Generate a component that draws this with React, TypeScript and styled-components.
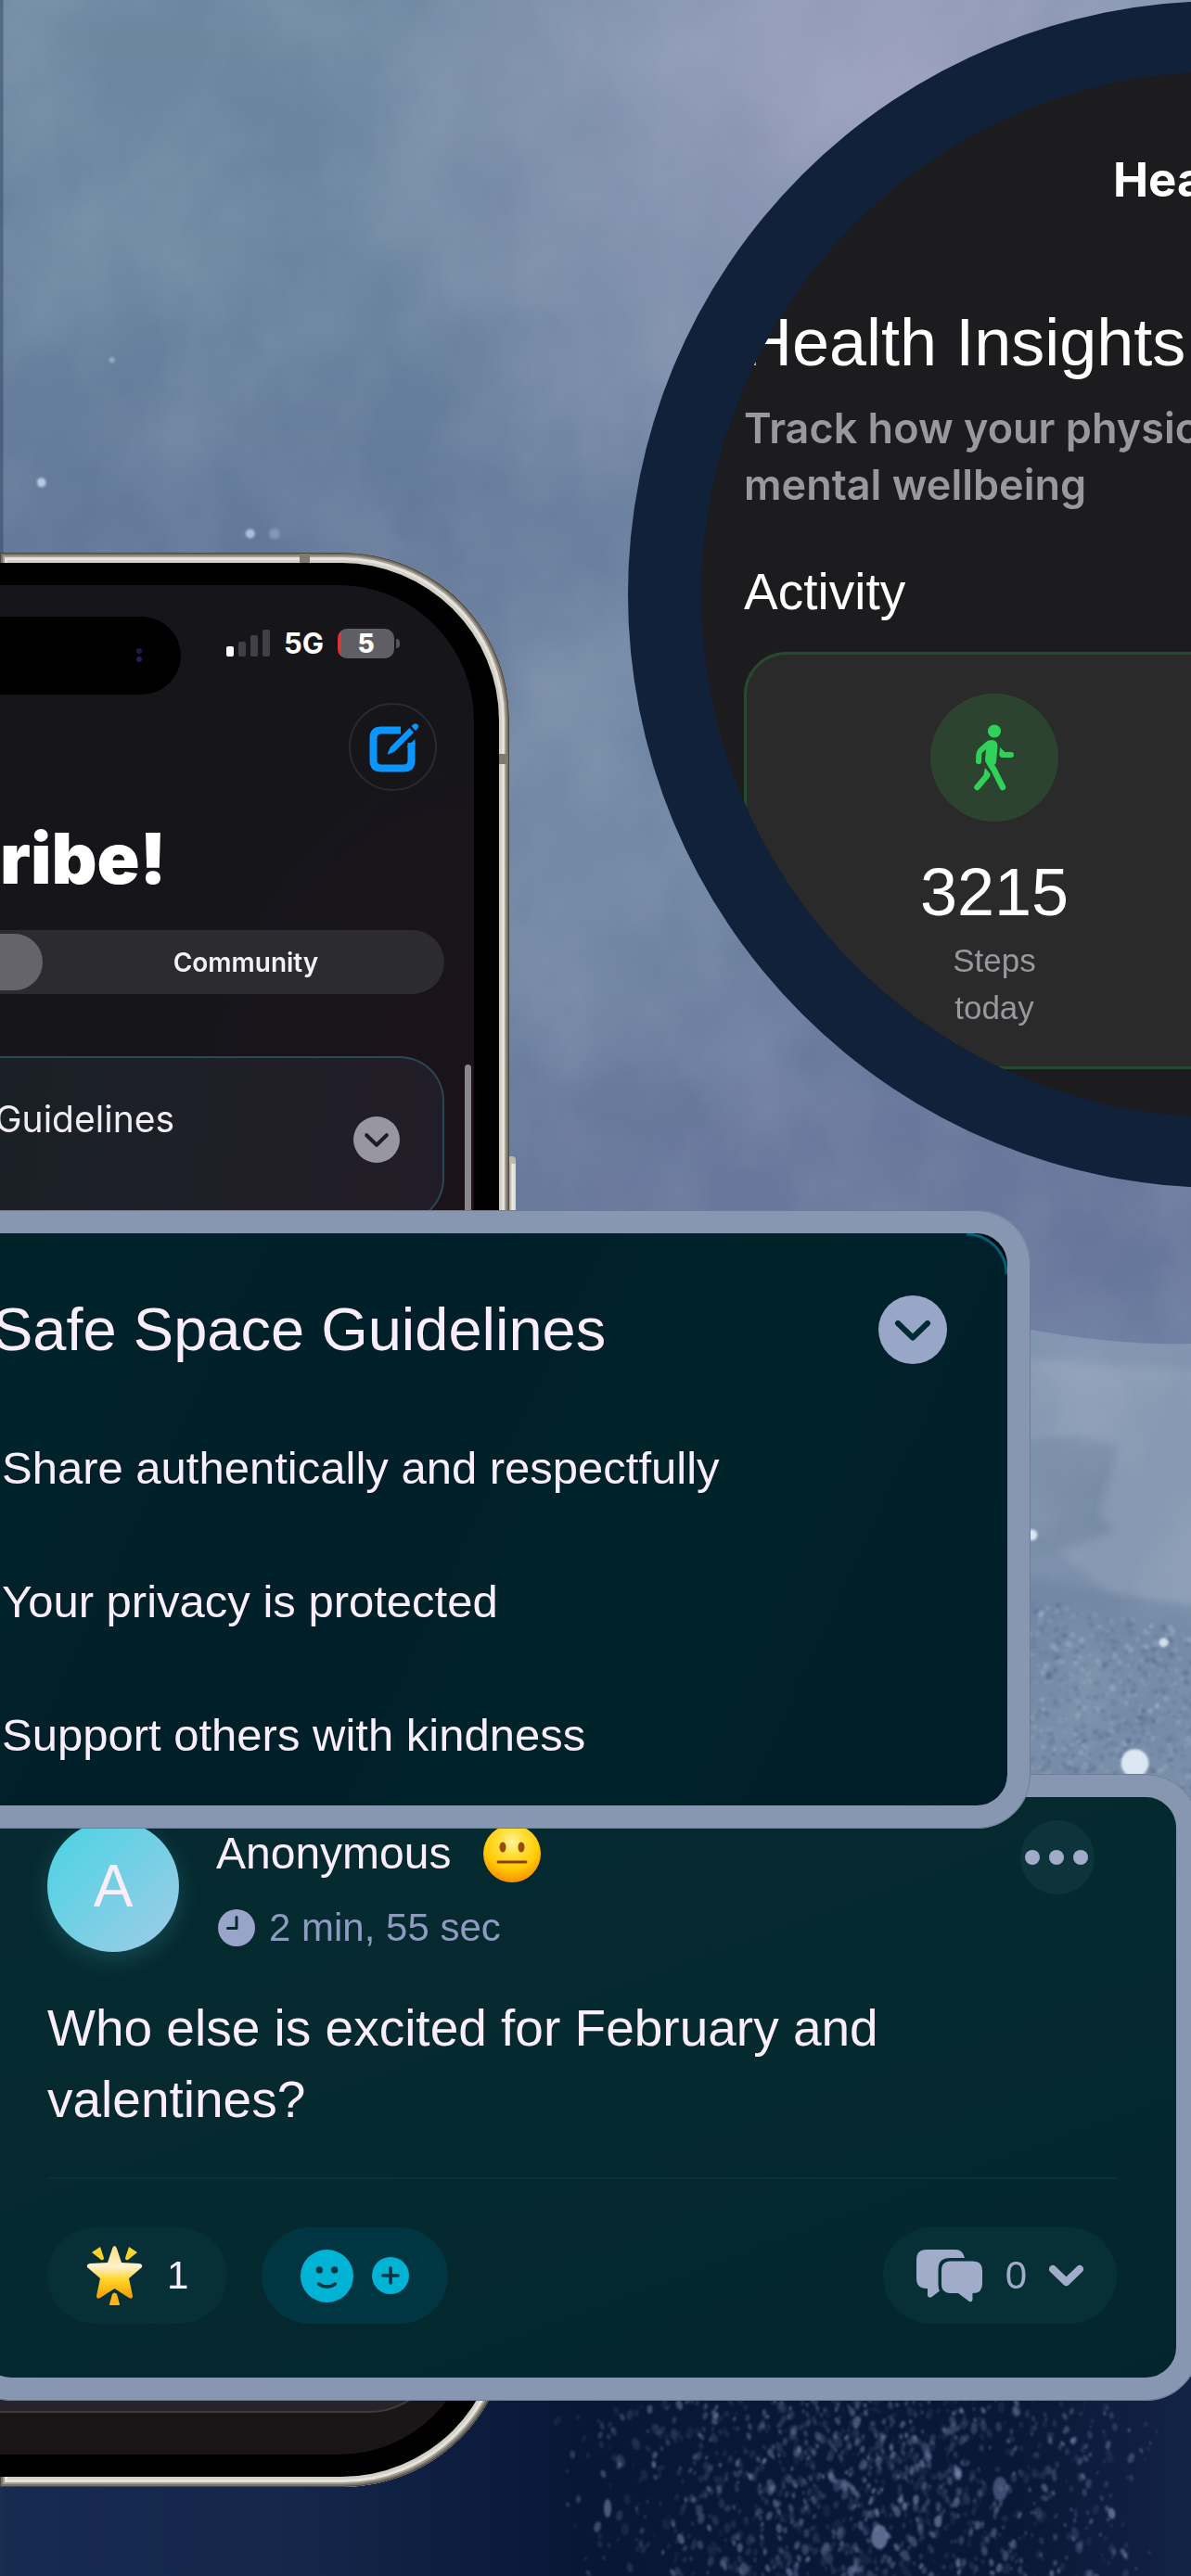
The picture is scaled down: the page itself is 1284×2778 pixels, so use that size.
import React from "react";
import styled, { createGlobalStyle } from "styled-components";

const helvetica = `"Liberation Sans", Arial, sans-serif`;
const system = `Inter, "Liberation Sans", sans-serif`;

const GlobalStyle = createGlobalStyle`
  *, *::before, *::after { box-sizing: border-box; }
  body { margin: 0; background: #64799a; font-family: ${helvetica}; }
  h1, h2, h3, p, ul { margin: 0; padding: 0; font-weight: 400; }
  ul { list-style: none; }
  button { border: 0; padding: 0; font: inherit; color: inherit; cursor: pointer; }
  svg { display: block; flex: none; }
`;

/* ---------- stage ---------- */

const Stage = styled.main`
  position: relative;
  isolation: isolate;
  display: flex;
  flex-direction: column;
  min-height: 100vh;
  padding: 1305px 0 191px;
  overflow: hidden;
`;

const BackdropArt = styled.svg`
  position: absolute;
  inset: 0;
  z-index: -2;
  width: 100%;
  height: 100%;
`;

/* ---------- phone ---------- */

const PhoneFrame = styled.section`
  position: absolute;
  z-index: -1;
  top: 596px;
  bottom: 98px;
  left: 0;
  width: 549px;
  padding: 11px 11px 11px 0;
  border-radius: 0 180px 180px 0;
  background: #d3d0c7;
  box-shadow: inset 0 0 0 1px #4a463c, inset 0 0 0 3px #77736a, inset 0 0 0 5px #a29e94, inset 0 0 0 8px #e6e3dc;
`;

const AntennaBand = styled.span<{ $side: "top" | "right" }>`
  position: absolute;
  background: #7d7a6f;
  ${({ $side }) =>
    $side === "top"
      ? "top: 1px; right: 215px; width: 11px; height: 10px;"
      : "top: 217px; right: 1px; width: 10px; height: 11px;"}
`;

const SideButton = styled.span`
  position: absolute;
  top: 651px;
  right: -7px;
  width: 7px;
  height: 250px;
  border-radius: 0 4px 4px 0;
  border-top: 8px solid #bdb9ad;
  background: linear-gradient(90deg, #a5a196, #efece6 50%, #d8d5cb);
`;

const Bezel = styled.div`
  height: 100%;
  padding: 24px 27px 24px 0;
  border-radius: 0 170px 170px 0;
  background: #000;
`;

const Screen = styled.div`
  position: relative;
  display: flex;
  flex-direction: column;
  height: 100%;
  padding: 34px 0 45px;
  border-radius: 0 146px 146px 0;
  overflow: hidden;
  background:
    radial-gradient(ellipse 300px 420px at 100% 30%, #1d131a, transparent),
    linear-gradient(#16151a, #17151b 40%, #1a1617);
  color: #fff;
  font-family: ${system};
`;

const StatusRow = styled.div`
  display: flex;
  align-items: flex-start;
  gap: 49px;
`;

const Island = styled.div`
  display: flex;
  justify-content: flex-end;
  align-items: center;
  width: 195px;
  height: 84px;
  padding-right: 40px;
  border-radius: 0 42px 42px 0;
  background: #000;
`;

const StatusIcons = styled.div`
  display: flex;
  align-items: center;
  padding-top: 13px;
`;

const Network = styled.span`
  margin-left: 15px;
  font-size: 31px;
  line-height: 32px;
  font-weight: 700;
`;

const Battery = styled.span`
  position: relative;
  display: grid;
  place-items: center;
  width: 61px;
  height: 32px;
  margin-left: 15px;
  border-radius: 10px;
  background: linear-gradient(90deg, #d8363c 4px, #605e65 4px);
  font-size: 28px;
  line-height: 32px;
  font-weight: 800;
  &::after {
    content: "";
    position: absolute;
    right: -6px;
    top: 11px;
    width: 4px;
    height: 10px;
    border-radius: 0 4px 4px 0;
    background: #55535a;
  }
`;

const ComposeButton = styled.button`
  display: grid;
  place-items: center;
  align-self: flex-end;
  width: 95px;
  height: 95px;
  padding-left: 4px;
  margin: 9px 40px 0 0;
  border: 2px solid #2b2a2f;
  border-radius: 50%;
  background: #161519;
`;

const AppTitle = styled.h1`
  margin-top: 32px;
  font-size: 76px;
  line-height: 80px;
  font-weight: 900;
`;

const Segments = styled.div`
  display: flex;
  width: 479px;
  height: 69px;
  margin-top: 38px;
  padding: 4px 0;
  border-radius: 0 35px 35px 0;
  background: #2c2b30;
`;

const Segment = styled.button<{ $selected?: boolean }>`
  flex: ${({ $selected }) => ($selected ? "0 0 46px" : "1")};
  padding-left: ${({ $selected }) => ($selected ? "0" : "5px")};
  border-radius: 0 31px 31px 0;
  background: ${({ $selected }) => ($selected ? "#65636c" : "transparent")};
  color: #f2f2f4;
  font-size: 28px;
  font-weight: 600;
`;

const PhoneCard = styled.div`
  display: flex;
  justify-content: space-between;
  align-items: center;
  width: 479px;
  height: 180px;
  margin-top: 67px;
  padding: 0 46px 0 0;
  border: 2px solid #2d4653;
  border-left: 0;
  border-radius: 0 48px 48px 0;
  background: linear-gradient(100deg, #1a2027, #201f28 60%, #211d28);
`;

const PhoneCardTitle = styled.h2`
  display: flex;
  justify-content: flex-end;
  width: 188px;
  margin-bottom: 44px;
  color: #f0eef2;
  font-size: 39px;
  line-height: 48px;
`;

const ScrollThumb = styled.span`
  position: absolute;
  top: 517px;
  right: 3px;
  width: 7px;
  height: 400px;
  border-radius: 4px;
  background: #8a878c;
`;

const TabBar = styled.div`
  width: 478px;
  height: 160px;
  margin-top: auto;
  border: 2px solid #3e3b3f;
  border-left: 0;
  border-radius: 0 80px 80px 0;
  background: #262428;
`;

/* ---------- magnified health lens ---------- */

const Lens = styled.section`
  position: absolute;
  top: 1px;
  left: 677px;
  width: 1282px;
  height: 1280px;
  padding: 87px 0 0 46px;
  border: solid #112139;
  border-width: 76px 79px;
  border-radius: 50%;
  overflow: hidden;
  background: #1c1c1e;
  color: #fff;
`;

const LensNav = styled.h2`
  padding-left: 398px;
  font: 700 51px/60px ${system};
`;

const LensTitle = styled.h1`
  margin-top: 105px;
  font-size: 72px;
  line-height: 80px;
`;

const LensLead = styled.p`
  margin-top: 22px;
  color: #98989f;
  font: 600 45px/61px ${system};
  white-space: nowrap;
`;

const LensHeading = styled.h3`
  margin-top: 53px;
  font-size: 55px;
  line-height: 64px;
`;

const StatCard = styled.div`
  display: grid;
  grid-template-columns: 534px 1fr;
  margin-top: 33px;
  padding: 42px 0 38px;
  border: 3px solid #264a31;
  border-radius: 46px;
  background: #2a2a2a;
`;

const Stat = styled.div`
  display: flex;
  flex-direction: column;
  align-items: center;
`;

const StatIcon = styled.span`
  display: grid;
  place-items: center;
  width: 138px;
  height: 138px;
  border-radius: 50%;
  background: #2b432f;
`;

const StatValue = styled.strong`
  margin-top: 36px;
  font-size: 72px;
  line-height: 80px;
  font-weight: 400;
`;

const StatLabel = styled.span`
  width: 120px;
  margin-top: 8px;
  color: #98989f;
  font-size: 35px;
  line-height: 51px;
  text-align: center;
`;

/* ---------- cards ---------- */

const Card = styled.section`
  border: 25px solid #8897b1;
  border-radius: 58px;
  outline: 1px solid #6d7d95;
  outline-offset: -1px;
  color: #fbeefc;
`;

const GuidelinesCard = styled(Card)`
  position: relative;
  z-index: 1;
  margin: 0 173px 0 -60px;
  padding: 67px 65px 48px 27px;
  background:
    radial-gradient(circle at 0 100%, transparent 41px, #005f78 42px, #005f78 44px, #000c12 45px)
      100% 0 / 44px 44px no-repeat,
    linear-gradient(115deg, #00232a, #001f29 40%, #00232a 62%, #001e29);
  background-origin: padding-box;
  background-clip: padding-box;
`;

const CardHead = styled.header`
  display: flex;
  justify-content: space-between;
  align-items: center;
`;

const CardTitle = styled.h2`
  font-size: 65px;
  line-height: 74px;
`;

const RoundButton = styled.button`
  border-radius: 50%;
  background: transparent;
`;

const RuleList = styled.ul`
  display: grid;
  gap: 88px;
  padding-left: 10px;
  margin-top: 84px;
  font-size: 49px;
  line-height: 56px;
`;

const PostCard = styled(Card)`
  margin: -59px -9px 0 -46px;
  padding: 25px 64px 58px 72px;
  background: linear-gradient(160deg, #062a30, #04292e 50%, #02262b);
`;

const PostHead = styled.header`
  display: flex;
  align-items: flex-start;
  gap: 40px;
`;

const Avatar = styled.span`
  display: grid;
  place-items: center;
  width: 142px;
  height: 142px;
  border-radius: 50%;
  background: linear-gradient(135deg, #4fd3e3 10%, #98cce6 90%);
  box-shadow: 0 8px 26px rgba(90, 200, 225, 0.2);
  font-size: 64px;
  line-height: 74px;
`;

const Author = styled.div`
  flex: 1;
  padding-top: 8px;
`;

const AuthorName = styled.h3`
  display: flex;
  align-items: center;
  gap: 34px;
  height: 56px;
  font-size: 48px;
  line-height: 56px;
`;

const PostTime = styled.p`
  display: flex;
  align-items: center;
  gap: 15px;
  margin-top: 28px;
  padding-left: 2px;
  color: #8e9bc0;
  font-size: 42px;
  line-height: 48px;
`;

const MoreButton = styled(RoundButton)`
  display: grid;
  place-items: center;
  width: 80px;
  height: 80px;
  margin-right: 24px;
  background: #0d343a;
`;

const PostText = styled.p`
  margin-top: 44px;
  max-width: 1000px;
  font-size: 55px;
  line-height: 77px;
`;

const PostActions = styled.footer`
  display: flex;
  gap: 37px;
  margin-top: 45px;
  padding-top: 52px;
  border-top: 2px solid #083239;
`;

const Pill = styled.button<{ $tone?: "accent"; $gap: number; $end?: boolean }>`
  display: flex;
  align-items: center;
  gap: ${({ $gap }) => $gap}px;
  height: 104px;
  margin-left: ${({ $end }) => ($end ? "auto" : "0")};
  padding: 0 ${({ $end }) => ($end ? "36px" : "42px")};
  border-radius: 52px;
  background: ${({ $tone }) => ($tone === "accent" ? "#003541" : "#063036")};
  color: ${({ $end }) => ($end ? "#a0acca" : "#fbeefc")};
  font-size: 42px;
  line-height: 48px;
`;

/* ---------- drawings ---------- */

function seeded(seed: number) {
  let s = seed;
  return () => {
    s = (s * 16807) % 2147483647;
    return s / 2147483647;
  };
}

const rand = seeded(4217);
const sparkles = Array.from({ length: 1500 }, () => {
  const x = 600 + (rand() + rand()) * 330;
  const size = 1.6 + rand() * rand() * 4.4;
  return {
    x,
    y: 2560 + rand() * 218,
    rx: size * 0.8,
    ry: size * 1.3,
    turn: -30 + rand() * 60,
    o: 0.08 + rand() * rand() * 0.5,
  };
});
const sand = Array.from({ length: 700 }, () => {
  const x = 1105 + rand() * 180;
  return {
    x,
    y: 1722 + (x - 1105) * 0.2 + rand() * 190,
    r: 1 + rand() * 2.4,
    dark: rand() > 0.5,
    o: 0.1 + rand() * 0.22,
  };
});

const Backdrop = () => (
  <BackdropArt viewBox="0 0 1284 2778" preserveAspectRatio="xMidYMid slice" aria-hidden="true">
    <defs>
      <linearGradient id="sky" x1="0" y1="0" x2="0" y2="1">
        <stop offset="0" stopColor="#6d87a1" />
        <stop offset="0.12" stopColor="#69829e" />
        <stop offset="0.22" stopColor="#617697" />
        <stop offset="0.34" stopColor="#6c819f" />
        <stop offset="0.48" stopColor="#647599" />
        <stop offset="0.7" stopColor="#6f86a4" />
      </linearGradient>
      <radialGradient id="lilac">
        <stop offset="0" stopColor="#a3a4c4" />
        <stop offset="1" stopColor="#a3a4c4" stopOpacity="0" />
      </radialGradient>
      <radialGradient id="mist">
        <stop offset="0" stopColor="#859cb3" stopOpacity="0.85" />
        <stop offset="1" stopColor="#859cb3" stopOpacity="0" />
      </radialGradient>
      <radialGradient id="violet">
        <stop offset="0" stopColor="#6a779c" />
        <stop offset="1" stopColor="#6a779c" stopOpacity="0" />
      </radialGradient>
      <linearGradient id="deep" x1="0" y1="0" x2="1" y2="0">
        <stop offset="0" stopColor="#172a50" />
        <stop offset="0.25" stopColor="#14264a" />
        <stop offset="0.48" stopColor="#091737" />
        <stop offset="0.85" stopColor="#0a1736" />
        <stop offset="1" stopColor="#132346" />
      </linearGradient>
      <filter id="wash" x="0" y="0" width="100%" height="100%">
        <feTurbulence type="fractalNoise" baseFrequency="0.008 0.006" numOctaves="6" seed="11" />
        <feColorMatrix values="0 0 0 0 0.68  0 0 0 0 0.74  0 0 0 0 0.84  1.4 0 0 0 -0.45" />
      </filter>
      <filter id="soft" x="-20%" y="-20%" width="140%" height="140%">
        <feGaussianBlur stdDeviation="1" />
      </filter>
      <filter id="softer" x="-20%" y="-20%" width="140%" height="140%">
        <feGaussianBlur stdDeviation="5" />
      </filter>
    </defs>
    <rect width="1284" height="2778" fill="url(#sky)" />
    <ellipse cx="980" cy="80" rx="620" ry="620" fill="url(#lilac)" opacity="0.85" />
    <ellipse cx="640" cy="800" rx="200" ry="420" fill="url(#mist)" opacity="0.55" />
    <ellipse cx="960" cy="1300" rx="520" ry="260" fill="url(#violet)" />
    <path d="M1100 1431 Q1200 1450 1284 1448 V1930 H1100Z" fill="#7b8fac" />
    <path d="M1050 1456 Q1170 1474 1340 1476 V1740 L1200 1720 L1100 1640Z" fill="#8b9cb4" opacity="0.8" filter="url(#softer)" />
    <path d="M1060 1565 Q1160 1535 1205 1560 L1184 1630 L1200 1650 L1060 1700Z" fill="#7287a3" opacity="0.75" filter="url(#softer)" />
    <path d="M1050 1685 L1200 1718 L1340 1740 V1990 H1050Z" fill="#7187a4" opacity="0.85" filter="url(#softer)" />
    <rect width="1284" height="2000" filter="url(#wash)" opacity="0.18" />
    <rect y="2440" width="1284" height="338" fill="url(#deep)" />
    <g filter="url(#soft)">
      {sand.map((d, i) => (
        <circle key={i} cx={d.x} cy={d.y} r={d.r} fill={d.dark ? "#3f5374" : "#b5c6d8"} opacity={d.o} />
      ))}
      {sparkles.map((d, i) => (
        <ellipse
          key={i}
          cx={d.x}
          cy={d.y}
          rx={d.rx}
          ry={d.ry}
          transform={`rotate(${d.turn} ${d.x} ${d.y})`}
          fill="#93a3c8"
          opacity={d.o}
        />
      ))}
      <circle cx="1223" cy="1900" r="15" fill="#dbe8f3" />
      <circle cx="1254" cy="1770" r="5" fill="#d0dfec" />
      <circle cx="1112" cy="1654" r="6" fill="#dbe8f3" />
      <circle cx="45" cy="520" r="5" fill="#b4cbe2" />
      <circle cx="270" cy="575" r="5" fill="#a9c2db" />
      <circle cx="121" cy="388" r="3" fill="#93adc8" />
      <circle cx="296" cy="575" r="6" fill="#8ba3be" opacity="0.7" />
      <ellipse cx="948" cy="2734" rx="9" ry="13" fill="#7f8bb4" opacity="0.7" />
      <ellipse cx="1078" cy="2682" rx="8" ry="13" fill="#66709a" opacity="0.6" />
      <ellipse cx="655" cy="2703" rx="4" ry="10" fill="#7585a8" opacity="0.6" />
    </g>
    <rect width="4" height="2778" fill="#22344f" opacity="0.4" />
  </BackdropArt>
);

const SignalBars = () => (
  <svg width="47" height="30" viewBox="0 0 47 30" aria-hidden="true">
    <rect x="0" y="18" width="8" height="11" rx="2" fill="#fff" />
    <rect x="13" y="13" width="8" height="16" rx="2" fill="#424046" />
    <rect x="26" y="6" width="8" height="23" rx="2" fill="#424046" />
    <rect x="39" y="0" width="8" height="29" rx="2" fill="#424046" />
  </svg>
);

const CameraDots = () => (
  <svg width="10" height="16" viewBox="0 0 10 16" aria-hidden="true">
    <circle cx="5" cy="3" r="3" fill="#1c1c4a" />
    <circle cx="5" cy="12" r="3" fill="#20205a" />
  </svg>
);

const ComposeIcon = () => (
  <svg width="56" height="56" viewBox="0 0 56 56" fill="none" aria-hidden="true">
    <path d="M34 9.500 H13 Q4.500 9.500 4.500 18 V42 Q4.500 50.500 13 50.500 H37 Q45.500 50.500 45.500 42 V23" stroke="#0a96ff" strokeWidth="8" />
    <path d="M43.500 7 L48 12 L27.500 32.500 L20.500 35.500 Q19.500 35.500 20 34 L23 27.500Z" fill="#0a96ff" />
    <path d="M45.500 5 L48 2.800 Q50 1.500 52 3.200 Q54 5.300 52.200 7.600 L50 10Z" fill="#0a96ff" />
    <path d="M49.500 19 L40 28 L49.500 26Z" fill="#0a96ff" />
  </svg>
);

const ChevronBadge = ({ size, fill, mark }: { size: number; fill: string; mark: string }) => (
  <svg width={size} height={size} viewBox="0 0 74 74" aria-hidden="true">
    <circle cx="37" cy="37" r="37" fill={fill} />
    <path d="M21 30 L37 45.500 L53 30" fill="none" stroke={mark} strokeWidth="6" strokeLinecap="round" strokeLinejoin="round" />
  </svg>
);

const WalkIcon = () => (
  <svg width="44" height="72" viewBox="0 0 44 72" fill="none" stroke="#30d158" strokeLinecap="round" strokeLinejoin="round" aria-hidden="true">
    <circle cx="22" cy="7.500" r="7" fill="#30d158" stroke="none" />
    <path d="M12 21 Q15 17 19 17 Q25.500 17 25.500 24 L24 41 Q23 45 18 45 Q12 43 12 38 L13 27Z" fill="#30d158" stroke="none" />
    <path d="M15.500 21 L7.500 28 Q5.500 30 5.300 33 L5 40" strokeWidth="6" />
    <path d="M17 42 Q22 49 25 56 L31 68" strokeWidth="6.500" />
    <path d="M14 55.500 L3.500 68" strokeWidth="6.500" />
    <path d="M12 47 L18 54 L12 58 L10.500 54Z" fill="#30d158" stroke="none" />
    <path d="M31 33 H40" strokeWidth="6" />
    <path d="M28 25 L34 30.500 L32 36 Q28 36 27.200 33Z" fill="#30d158" stroke="none" />
  </svg>
);

const NeutralFace = () => (
  <svg width="64" height="64" viewBox="0 0 64 64" role="img" aria-label="Neutral face">
    <defs>
      <radialGradient id="face" cx="0.5" cy="0.3" r="0.72">
        <stop offset="0" stopColor="#fff3a0" />
        <stop offset="0.3" stopColor="#ffe03a" />
        <stop offset="0.65" stopColor="#ffcb05" />
        <stop offset="1" stopColor="#f98a05" />
      </radialGradient>
    </defs>
    <circle cx="32" cy="32" r="31" fill="url(#face)" />
    <ellipse cx="22" cy="25" rx="3.500" ry="5.500" fill="#9a4a08" />
    <ellipse cx="42" cy="25" rx="3.500" ry="5.500" fill="#9a4a08" />
    <path d="M17 41 H47" stroke="#8a3d05" strokeWidth="3" strokeLinecap="round" />
  </svg>
);

const ClockIcon = () => (
  <svg width="40" height="40" viewBox="0 0 40 40" aria-hidden="true">
    <circle cx="20" cy="20" r="20" fill="#98a5c8" />
    <path d="M20 8.500 V20.500 H10.500" fill="none" stroke="#05292f" strokeWidth="3" strokeLinecap="round" strokeLinejoin="round" />
  </svg>
);

const DotsIcon = () => (
  <svg width="70" height="16" viewBox="0 0 70 16" fill="#a0acca" aria-hidden="true">
    <circle cx="8" cy="8" r="8" />
    <circle cx="34" cy="8" r="8" />
    <circle cx="60" cy="8" r="8" />
  </svg>
);

const GlowingStar = () => (
  <svg width="61" height="66" viewBox="0 0 61 66" role="img" aria-label="Glowing star">
    <defs>
      <linearGradient id="star" x1="0" y1="0" x2="0" y2="1">
        <stop offset="0" stopColor="#ffe17a" />
        <stop offset="0.4" stopColor="#fff0cf" />
        <stop offset="0.65" stopColor="#ffd425" />
        <stop offset="1" stopColor="#f79a08" />
      </linearGradient>
    </defs>
    <path
      d="M30.500 1 Q32 1 33 4 L38 19 L57 20 Q61 20.500 60 24 L46 36 L50 55 Q50 59 46 57 L30.500 47 L15 57 Q11 59 11 55 L15 36 L1 24 Q0 20.500 4 20 L23 19 L28 4 Q29 1 30.500 1Z"
      fill="url(#star)"
    />
    <path d="M6 8 L15 2 L19 14 Q19 17 16 16Z" fill="#fdd22a" />
    <path d="M55 8 L46 2 L42 14 Q42 17 45 16Z" fill="#fdd22a" />
    <path d="M28 53 Q30.500 50 33 53 L36 64 Q36 65 35 65 H26 Q25 65 25 64Z" fill="#fdb515" />
  </svg>
);

const SmileIcon = () => (
  <svg width="57" height="57" viewBox="0 0 56 56" aria-hidden="true">
    <circle cx="28" cy="28" r="28" fill="#00b2d4" />
    <circle cx="20" cy="21.500" r="3.600" fill="#003541" />
    <circle cx="36" cy="21.500" r="3.600" fill="#003541" />
    <path d="M19.500 36.500 Q28 42.500 36.500 36.500" fill="none" stroke="#003541" strokeWidth="3.600" strokeLinecap="round" />
  </svg>
);

const PlusIcon = () => (
  <svg width="40" height="40" viewBox="0 0 40 40" aria-hidden="true">
    <circle cx="20" cy="20" r="20" fill="#00b2d4" />
    <path d="M20 12 V28 M12 20 H28" stroke="#003541" strokeWidth="3.600" strokeLinecap="round" />
  </svg>
);

const ChatIcon = () => (
  <svg width="72" height="57" viewBox="0 0 72 57" fill="#a0acca" aria-hidden="true">
    <path d="M11 0 H42 Q50 0 52 9 H36 Q23.500 9 23.500 21 V36 Q23.500 42 25 44.500 L16 51.500 Q12 52 12 49 V42 H11 Q0 42 0 31 V11 Q0 0 11 0Z" />
    <path d="M37 12.500 H61 Q71 12.500 71 22.500 V37 Q71 47 61 47 H60.500 V54 Q60 57 57 56 L45 47 H37 Q27 47 27 37 V22.500 Q27 12.500 37 12.500Z" />
  </svg>
);

const ChevronDown = () => (
  <svg width="37" height="24" viewBox="0 0 37 24" aria-hidden="true">
    <path d="M4 5 L18.500 19 L33 5" fill="none" stroke="#a0acca" strokeWidth="8" strokeLinecap="round" strokeLinejoin="round" />
  </svg>
);

/* ---------- page ---------- */

const rules = [
  "Share authentically and respectfully",
  "Your privacy is protected",
  "Support others with kindness",
];

export default function App() {
  return (
    <Stage>
      <GlobalStyle />
      <Backdrop />

      <PhoneFrame>
        <AntennaBand $side="top" />
        <AntennaBand $side="right" />
        <SideButton />
        <Bezel>
          <Screen>
            <StatusRow>
              <Island>
                <CameraDots />
              </Island>
              <StatusIcons>
                <SignalBars />
                <Network>5G</Network>
                <Battery>5</Battery>
              </StatusIcons>
            </StatusRow>
            <ComposeButton aria-label="Compose">
              <ComposeIcon />
            </ComposeButton>
            <AppTitle>ribe!</AppTitle>
            <Segments>
              <Segment $selected aria-label="Personal" />
              <Segment>Community</Segment>
            </Segments>
            <PhoneCard>
              <PhoneCardTitle>Guidelines</PhoneCardTitle>
              <RoundButton aria-label="Expand">
                <ChevronBadge size={50} fill="#9896a0" mark="#1e1c26" />
              </RoundButton>
            </PhoneCard>
            <ScrollThumb />
            <TabBar />
          </Screen>
        </Bezel>
      </PhoneFrame>

      <Lens>
        <LensNav>Health</LensNav>
        <LensTitle>Health Insights</LensTitle>
        <LensLead>
          Track how your physical
          <br />
          mental wellbeing
        </LensLead>
        <LensHeading>Activity</LensHeading>
        <StatCard>
          <Stat>
            <StatIcon>
              <WalkIcon />
            </StatIcon>
            <StatValue>3215</StatValue>
            <StatLabel>Steps today</StatLabel>
          </Stat>
        </StatCard>
      </Lens>

      <GuidelinesCard>
        <CardHead>
          <CardTitle>Safe Space Guidelines</CardTitle>
          <RoundButton aria-label="Collapse guidelines">
            <ChevronBadge size={74} fill="#98a7c7" mark="#002a33" />
          </RoundButton>
        </CardHead>
        <RuleList>
          {rules.map((rule) => (
            <li key={rule}>{rule}</li>
          ))}
        </RuleList>
      </GuidelinesCard>

      <PostCard>
        <PostHead>
          <Avatar>A</Avatar>
          <Author>
            <AuthorName>
              Anonymous
              <NeutralFace />
            </AuthorName>
            <PostTime>
              <ClockIcon />
              2 min, 55 sec
            </PostTime>
          </Author>
          <MoreButton aria-label="More options">
            <DotsIcon />
          </MoreButton>
        </PostHead>
        <PostText>Who else is excited for February and valentines?</PostText>
        <PostActions>
          <Pill $gap={26}>
            <GlowingStar />1
          </Pill>
          <Pill $gap={20} $tone="accent" aria-label="Add reaction">
            <SmileIcon />
            <PlusIcon />
          </Pill>
          <Pill $gap={24} $end>
            <ChatIcon />0<ChevronDown />
          </Pill>
        </PostActions>
      </PostCard>
    </Stage>
  );
}
